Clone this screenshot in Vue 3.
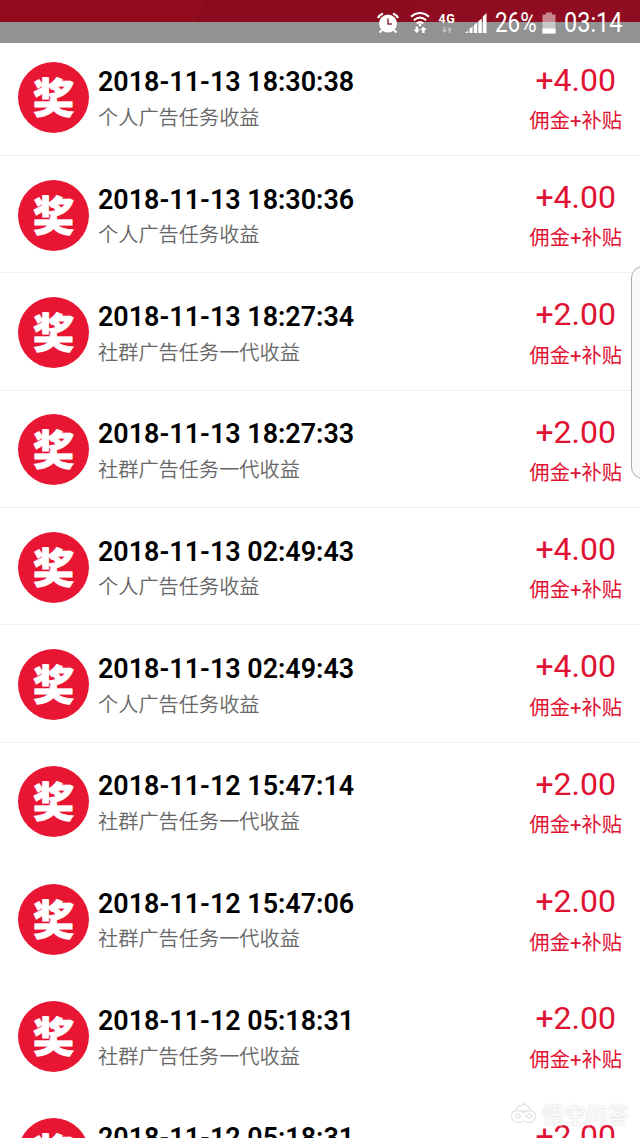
<script setup>
import { ref } from 'vue'

const personal = '个人广告任务收益'
const group = '社群广告任务一代收益'

const records = ref([
    { time: '2018-11-13 18:30:38', title: personal, amount: '+4.00' },
    { time: '2018-11-13 18:30:36', title: personal, amount: '+4.00' },
    { time: '2018-11-13 18:27:34', title: group, amount: '+2.00' },
    { time: '2018-11-13 18:27:33', title: group, amount: '+2.00' },
    { time: '2018-11-13 02:49:43', title: personal, amount: '+4.00' },
    { time: '2018-11-13 02:49:43', title: personal, amount: '+4.00' },
    { time: '2018-11-12 15:47:14', title: group, amount: '+2.00' },
    { time: '2018-11-12 15:47:06', title: group, amount: '+2.00' },
    { time: '2018-11-12 05:18:31', title: group, amount: '+2.00' },
    { time: '2018-11-12 05:18:31', title: group, amount: '+2.00' }
])
</script>

<template>
    <div class="screen">
        <header class="status-bar">
            <svg class="alarm" width="22" height="22" viewBox="0 0 22 22">
                <circle cx="11" cy="11.6" r="9" fill="#fff"/>
                <path d="M1 6 Q2.5 3 6 1.6 M21 6 Q19.5 3 16 1.6 M5 18 L2.6 20.6 M17 18 L19.4 20.6" stroke="#fff" stroke-width="2.2" fill="none"/>
                <path d="M11 6.5 V12 H15" stroke="#93303c" stroke-width="1.5" fill="none"/>
            </svg>
            <svg class="wifi" width="20" height="22" viewBox="0 0 20 22">
                <path d="M1 4.6 Q10 -2.6 19 4.6 M3.8 8.3 Q10 3 16.2 8.3 M6.7 11.4 Q10 8.8 13.3 11.4" stroke="#fff" stroke-width="2" fill="none"/>
                <circle cx="10" cy="13" r="1.4" fill="#fff"/>
                <path d="M5.6 14.5 H8 V17.6 H10 L6.8 21 L3.6 17.6 H5.6 Z M12.2 21 H14.6 V18 H16.6 L13.4 14.5 L10.2 18 H12.2 Z" fill="#fff"/>
            </svg>
            <div class="network">
                <span>4G</span>
                <svg width="12" height="7" viewBox="0 0 12 7">
                    <path d="M2 0 H4 V3.6 H6 L3 7 L0 3.6 H2 Z M8 7 H10 V3.4 H12 L9 0 L6 3.4 H8 Z" fill="#c5c0c1"/>
                </svg>
            </div>
            <svg class="signal" width="22" height="22" viewBox="0 0 22 22">
                <path d="M0 21 L3 18.6 V21 Z M4.4 17 L7.6 14.6 V21 H4.4 Z M8.8 13.2 L12.2 10.6 V21 H8.8 Z M13.3 9.2 L16.8 6.4 V21 H13.3 Z M17.8 4.5 L21.5 1 V21 H17.8 Z" fill="#fff"/>
            </svg>
            <span class="percent">26%</span>
            <svg class="battery" width="14" height="22" viewBox="0 0 14 22">
                <path d="M4 0.5 H10 V2.5 H13.5 V21.5 H0.5 V2.5 H4 Z" fill="#fff" opacity="0.5"/>
                <path d="M0.5 16.5 H13.5 V21.5 H0.5 Z" fill="#fff"/>
            </svg>
            <span class="clock">03:14</span>
        </header>

        <ul class="list">
            <li v-for="(item, i) in records" :key="i" class="row" :class="{ lined: i < 6 }">
                <div class="badge"><span>奖</span></div>
                <div class="info">
                    <div class="time">{{ item.time }}</div>
                    <div class="title">{{ item.title }}</div>
                </div>
                <div class="income">
                    <div class="amount">{{ item.amount }}</div>
                    <div class="kind">佣金+补贴</div>
                </div>
            </li>
        </ul>

        <div class="edge-handle"></div>

        <div class="watermark">
            <svg width="27" height="24" viewBox="0 0 27 24">
                <g fill="#fff" stroke="#e6e6e6" stroke-width="1.4">
                    <path d="M6 9 Q7 4 12 3 L13.5 1 L15 3 Q20 4 21 9 Z"/>
                    <path d="M13.5 11 C10 7 1 8 1.5 14 C2 20 8 22 13.5 19 C19 22 25 20 25.5 14 C26 8 17 7 13.5 11 Z"/>
                    <path d="M5 14 Q8 10.5 11 14 Q8 18 5 14 Z M16 14 Q19 10.5 22 14 Q19 18 16 14 Z"/>
                </g>
            </svg>
            <span>悟空问答</span>
        </div>
    </div>
</template>

<style>
body {
    background: #fff;
    overflow: hidden;
}
</style>

<style scoped>
.screen {
    position: relative;
    width: 640px;
    height: 1138px;
    overflow: hidden;
    background: #fff;
    font-family: Roboto, "Noto Sans CJK SC", sans-serif;
}

.status-bar {
    position: relative;
    z-index: 1;
    box-sizing: border-box;
    height: 42.5px;
    padding: 3px 18px 0 0;
    display: flex;
    align-items: center;
    justify-content: flex-end;
    color: #fff;
    background:
        linear-gradient(#929292, #929292) 0 21.5px / 100% 21px no-repeat,
        linear-gradient(118deg, #920c20 31%, #890b1d 31.2%, #890b1d 60%, #900c20 64%);
}
.wifi {
    margin-left: 11px;
}
.network {
    width: 18px;
    height: 20px;
    margin-left: 8px;
    display: flex;
    flex-direction: column;
    align-items: center;
    gap: 2px;
    font-size: 12.5px;
    line-height: 12px;
    font-weight: 700;
    letter-spacing: 0.6px;
}
.signal {
    margin-left: 9px;
}
.percent, .clock {
    font-size: 27px;
    line-height: 40px;
    white-space: nowrap;
    transform-origin: left;
}
.percent {
    width: 43px;
    margin-left: 8px;
    transform: scaleX(0.83);
}
.battery {
    margin-left: 4px;
}
.clock {
    width: 58px;
    margin-left: 8px;
    transform: scaleX(0.87);
}

/* the list is scrolled slightly under the status bar */
.list {
    margin: -3.8px 0 0;
    padding: 0;
    list-style: none;
}
.row {
    box-sizing: border-box;
    height: 117.35px;
    padding: 23.7px 18px 0;
    display: flex;
    align-items: flex-start;
    border-bottom: 1px solid transparent;
}
.row.lined {
    border-bottom-color: #f0f0f0;
}
.badge {
    flex: none;
    width: 71px;
    height: 71px;
    border-radius: 50%;
    background: #e81632;
    color: #fff;
    display: flex;
    justify-content: center;
    font: 900 41px/67px "Noto Sans CJK SC", sans-serif;
    -webkit-text-stroke: 0.9px #fff;
}
.info {
    flex: 1;
    padding: 3.8px 0 0 9px;
}
.time {
    font-size: 26.9px;
    line-height: 32px;
    font-weight: 600;
    color: #000;
    white-space: nowrap;
}
.title {
    margin-top: 3.8px;
    font-size: 20.2px;
    line-height: 30px;
    font-weight: 350;
    color: #666;
    font-family: "Noto Sans CJK SC", sans-serif;
}
.income {
    display: flex;
    flex-direction: column;
    align-items: center;
    color: #df1233;
}
.amount {
    margin-top: -0.8px;
    font-size: 32px;
    line-height: 36px;
}
.kind {
    margin-top: 8.5px;
    font-size: 20.3px;
    line-height: 30px;
    white-space: nowrap;
}

.edge-handle {
    position: absolute;
    box-sizing: border-box;
    left: 631px;
    top: 266px;
    width: 24px;
    height: 213px;
    border: 1px solid #aaa;
    border-radius: 12px;
    background: #fafafa;
}

.watermark {
    position: absolute;
    right: 11px;
    bottom: 9px;
    display: flex;
    align-items: center;
    gap: 5px;
    font: 500 21.7px/30px "Noto Sans CJK SC", sans-serif;
    color: rgba(255, 255, 255, 0.9);
    text-shadow: 0 0 2px #ccc;
}
</style>
